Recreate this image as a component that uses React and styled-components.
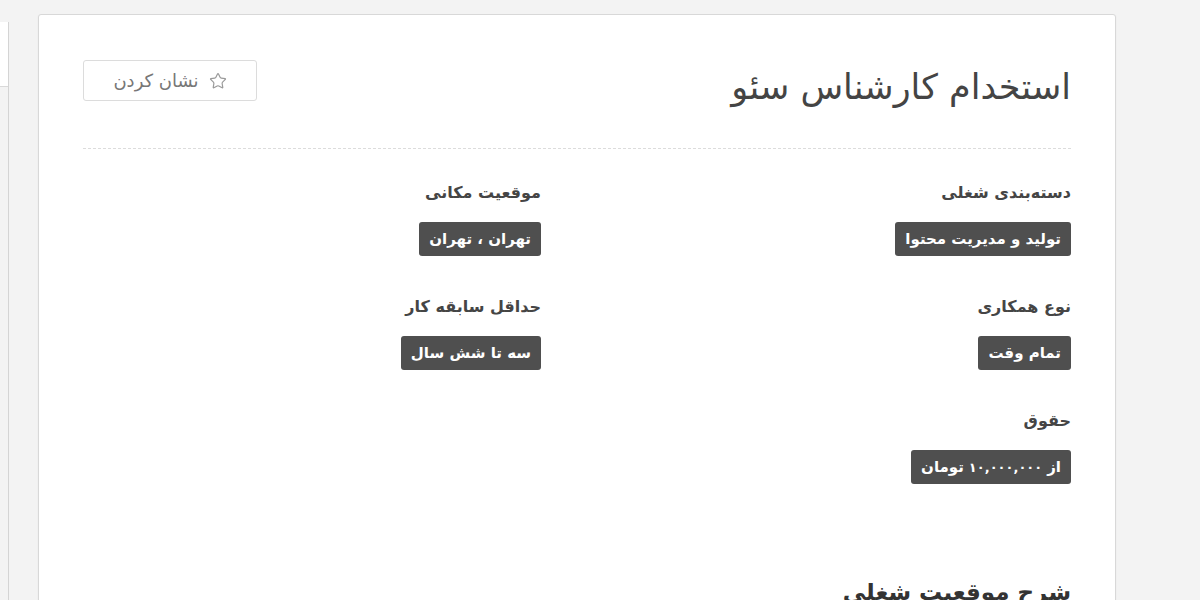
import styled, {createGlobalStyle} from "styled-components";
import {Star} from "lucide-react";

const GlobalStyle = createGlobalStyle`
    html, body {
        margin: 0;
        padding: 0;
        background: #f3f3f3;
        font-family: "DejaVu Sans", "Noto Sans", sans-serif;
    }
    * {
        box-sizing: border-box;
    }
`;

const Page = styled.div`
    display: flex;
    align-items: flex-start;
    gap: 29px;
    height: 600px;
    overflow: hidden;
`;

const Sidebar = styled.aside`
    flex: 0 0 9px;
    align-self: stretch;
    margin-top: 22px;
    border-right: 1px solid #d4d4d4;
`;

const SideBox = styled.div`
    height: 65px;
    background: #fff;
    border-bottom: 1px solid #d9d9d9;
`;

const Card = styled.main`
    direction: rtl;
    flex: 0 0 1078px;
    margin-top: 14px;
    min-height: 700px;
    padding: 44px 44px 0;
    background: #fff;
    border: 1px solid #d8d8d8;
    border-radius: 3px;
    box-shadow: 0 1px 2px rgba(0, 0, 0, 0.05);
`;

const Header = styled.header`
    display: flex;
    justify-content: space-between;
    align-items: flex-start;
    padding-bottom: 33px;
    border-bottom: 1px dashed #dcdcdc;
`;

const Title = styled.h1`
    margin: 0;
    font-size: 35px;
    font-weight: 400;
    line-height: 56px;
    color: #444;
`;

const MarkButton = styled.button`
    display: flex;
    align-items: center;
    justify-content: center;
    gap: 10px;
    width: 174px;
    height: 41px;
    margin-top: 1px;
    padding: 0;
    background: #fff;
    border: 1px solid #dcdcdc;
    border-radius: 3px;
    font-family: inherit;
    font-size: 18px;
    color: #777;
    cursor: pointer;

    svg {
        flex: none;
        color: #9a9a9a;
    }
`;

const InfoGrid = styled.dl`
    display: grid;
    grid-template-columns: 458px 458px;
    column-gap: 72px;
    row-gap: 39px;
    margin: 32px 0 0;
`;

const InfoItem = styled.div`
    display: flex;
    flex-direction: column;
    align-items: flex-start;
    gap: 17px;
`;

const Label = styled.dt`
    font-size: 16px;
    font-weight: 700;
    line-height: 24px;
    color: #454545;
`;

const Badge = styled.dd`
    display: inline-flex;
    align-items: center;
    height: 34px;
    margin: 0;
    padding: 0 10px;
    background: #4f4f4f;
    border-radius: 3px;
    font-size: 15px;
    font-weight: 700;
    color: #fff;
    white-space: nowrap;
`;

// persian digits run wide in this face, so they get a smaller size
const Digits = styled.span`
    margin: 0 5px;
    font-size: 13px;
    letter-spacing: -0.5px;
`;

const SectionTitle = styled.h2`
    margin: 92px 0 0;
    font-size: 23px;
    font-weight: 700;
    line-height: 32px;
    color: #333;
`;

const details = [
    {label: "دسته‌بندی شغلی", value: "تولید و مدیریت محتوا"},
    {label: "موقعیت مکانی", value: "تهران ، تهران"},
    {label: "نوع همکاری", value: "تمام وقت"},
    {label: "حداقل سابقه کار", value: "سه تا شش سال"},
    {label: "حقوق", value: <>از<Digits>۱۰,۰۰۰,۰۰۰</Digits>تومان</>},
];

export default function App() {
    return (
        <>
            <GlobalStyle/>
            <Page>
                <Sidebar>
                    <SideBox/>
                </Sidebar>
                <Card>
                    <Header>
                        <Title>استخدام کارشناس سئو</Title>
                        <MarkButton type="button">
                            <Star size={18} strokeWidth={1.6}/>
                            نشان کردن
                        </MarkButton>
                    </Header>
                    <InfoGrid>
                        {details.map(({label, value}) => (
                            <InfoItem key={label}>
                                <Label>{label}</Label>
                                <Badge>{value}</Badge>
                            </InfoItem>
                        ))}
                    </InfoGrid>
                    <SectionTitle>شرح موقعیت شغلی</SectionTitle>
                </Card>
            </Page>
        </>
    );
}
